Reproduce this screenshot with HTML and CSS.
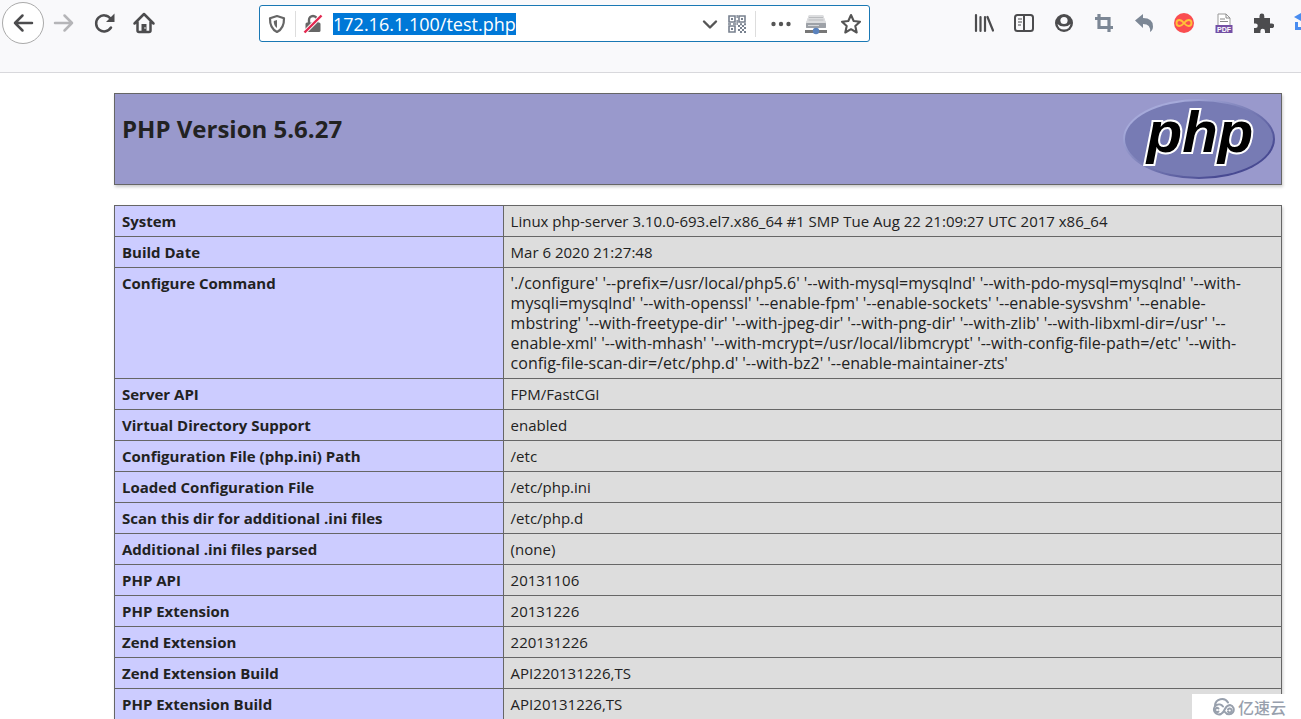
FILE: index.html
```html
<!DOCTYPE html>
<html lang="en">
<head>
<meta charset="utf-8">
<title>phpinfo()</title>
<link rel="stylesheet" href="styles.css">
</head>
<body>
<header class="toolbar">
  <nav class="nav">
    <button class="btn back" aria-label="Back"><svg viewBox="0 0 24 24"><path class="line" d="M21 12H4M11.500 4.500 4 12l7.500 7.500"/></svg></button>
    <button class="btn dim" aria-label="Forward"><svg viewBox="0 0 24 24"><path class="line" d="M3 12h17M12.500 4.500 20 12l-7.500 7.500"/></svg></button>
    <button class="btn" aria-label="Reload"><svg viewBox="0 0 24 24"><path class="line" d="M18.500 7.500A8 8 0 1 0 19 16.500"/><path d="M22.500 2.500v8.500H14z"/></svg></button>
    <button class="btn" aria-label="Home"><svg viewBox="0 0 24 24"><path class="line" d="M2.500 12.500 12 3l9.500 9.500M5.500 11v8.500q0 1.500 1.500 1.500h10q1.500 0 1.500-1.500V11"/><path d="M9.500 20v-7h5v7z"/><circle cx="13" cy="17" r=".8" fill="#fff"/></svg></button>
  </nav>
  <div class="urlbar">
    <svg class="ic" viewBox="0 0 20 20"><path d="M10 2 17 4.200q.3 10-7 13.800Q2.700 14.200 3 4.200z" fill="none" stroke="#666" stroke-width="2.200" stroke-linejoin="round"/><path d="M10 6v8q-3.500-2.500-3.200-7z" fill="#666"/></svg>
    <span class="sep"></span>
    <svg class="ic" viewBox="0 0 20 20"><path d="M6 9V6a4 4 0 0 1 8 0v3" fill="none" stroke="#666" stroke-width="2.400"/><rect x="2.500" y="8.500" width="15" height="9.500" rx="1.500" fill="#666"/><path d="M1.500 18.500 18.500 1.500" stroke="#fff" stroke-width="4"/><path d="M1.500 18.500 18.500 1.500" stroke="#e22850" stroke-width="2.400"/></svg>
    <div class="address"><a class="selected" href="#">172.16.1.100/test.php</a></div>
    <button class="small" aria-label="Show history"><svg class="ic" viewBox="0 0 20 20"><path d="m4 7.500 6 6 6-6" fill="none" stroke="#555" stroke-width="2.400" stroke-linecap="round" stroke-linejoin="round"/></svg></button>
    <button class="small qr" aria-label="QR code"><svg class="ic" viewBox="0 0 20 20"><g fill="none" stroke="#78818f" stroke-width="1.600"><path d="M2 2h6v6H2zM12 2h6v6h-6zM2 12h6v6H2z"/></g><path fill="#78818f" d="M4 4h2v2H4zM14 4h2v2h-2zM4 14h2v2H4zM9.500 1h1.300v3H9.500zM9.500 6h1.300v5H9.500zM1 9.300h3v1.400H1zM6 9.300h3v1.400H6zM13 9.300h2v2h-2zM17 9.300h2v2h-2zM11 11h2v2h-2zM15 11h2v2h-2zM13 13h2v2h-2zM17 13h2v2h-2zM11 15h2v2h-2zM15 15h2v2h-2zM13 17h2v2h-2zM17 17h2v2h-2z"/></svg></button>
    <span class="sep"></span>
    <button class="small dots" aria-label="Page actions"><svg class="ic" viewBox="0 0 20 20"><g fill="#555"><circle cx="2.500" cy="10" r="2.200"/><circle cx="10" cy="10" r="2.200"/><circle cx="17.500" cy="10" r="2.200"/></g></svg></button>
    <button class="small wide" aria-label="Server"><svg viewBox="0 0 22 22"><path d="M4 2h14l3 8v5H1v-5z" fill="#c5c7ca"/><path d="M4 2h14l3 8H1z" fill="#dcdddf"/><path d="M4 4.500h14M3.500 7h15" stroke="#b9bbbe"/><rect x="1" y="10" width="20" height="5" rx="1" fill="#9da1a7"/><path d="M3 12.500h11" stroke="#d5d7da"/><path d="M0 18.500h22" stroke="#777" stroke-width="3"/><circle cx="11" cy="18" r="3.200" fill="#5b83bd"/></svg></button>
    <button class="small star" aria-label="Bookmark"><svg viewBox="0 0 22 22"><path d="m11 2 2.700 6 6.300.7-4.700 4.300 1.400 6.500L11 16.200l-5.700 3.300L6.700 13 2 8.700 8.300 8z" fill="none" stroke="#555" stroke-width="2.100" stroke-linejoin="round"/></svg></button>
  </div>
  <div class="tools">
    <button class="tool" aria-label="Library"><svg viewBox="0 0 20 20"><path d="M2 2v16M6.500 4v14M11 4v14M13.500 4 19 17.500" fill="none" stroke="#4c4c4e" stroke-width="2.200" stroke-linecap="round"/></svg></button>
    <button class="tool" aria-label="Sidebars"><svg viewBox="0 0 20 20"><rect x="1" y="2" width="18" height="16" rx="2.500" fill="none" stroke="#4c4c4e" stroke-width="2"/><path d="M10 2v16" stroke="#4c4c4e" stroke-width="2"/><path d="M4 6h4M4 9h4M4 12h3" stroke="#4c4c4e" stroke-width="1.200"/></svg></button>
    <button class="tool" aria-label="Account"><svg viewBox="0 0 20 20"><circle cx="10" cy="10" r="9" fill="#4c4c4e"/><circle cx="10" cy="7.500" r="3.600" fill="#f9f9fb"/><path d="M3.500 11q2.500 2.600 6.500 2.600t6.500-2.600q-1 5.500-6.500 5.500T3.500 11z" fill="#f9f9fb"/></svg></button>
    <button class="tool" aria-label="Crop"><svg viewBox="0 0 20 20"><path d="M1 5.500h14V19M5 1v13.500h14" fill="none" stroke="#7c8795" stroke-width="3.200"/></svg></button>
    <button class="tool" aria-label="Undo"><svg viewBox="0 0 20 20"><path d="M1 7.500 9 1v4q10 0 10 8.500 0 3.500-3 5.500 1-8-7-8v4z" fill="#7c8795"/></svg></button>
    <button class="tool" aria-label="Infinity"><svg viewBox="0 0 20 20"><circle cx="10" cy="10" r="10" fill="#fa4d50"/><path d="M10 10Q7.500 7 5.500 7a3 3 0 0 0 0 6Q7.500 13 10 10t4.500-3a3 3 0 0 1 0 6Q12.500 13 10 10z" fill="none" stroke="#ffc238" stroke-width="1.900"/></svg></button>
    <button class="tool" aria-label="PDF"><svg viewBox="0 0 20 20"><path d="M4 1h8l4 4v9H4z" fill="#fff" stroke="#999"/><path d="M12 1v4h4M6 6h5M6 8.500h8" fill="none" stroke="#888"/><rect x="1.500" y="12" width="17" height="8" fill="#7450a5"/><text x="10" y="19" class="pdf">PDF</text></svg></button>
    <button class="tool" aria-label="Extensions"><svg viewBox="0 0 20 20"><path d="M0 5h5.500V3a2.400 2.400 0 1 1 4.800 0v2H16v5.500h1.500a2.300 2.300 0 1 1 0 4.500H16V20h-5v-2a2.300 2.300 0 1 0-4.600 0v2H0v-5h1.500a2.200 2.200 0 1 0 0-4.500H0z" fill="#4c4c4e"/></svg></button>
    <button class="tool edge" aria-label="Sync"><svg viewBox="0 0 20 20"><path d="M7 0v8L0 4zM1 9v8h18V9h-3v5H4V9z" fill="#4a8df0"/></svg></button>
  </div>
</header>
<main class="page">
  <section class="banner">
    <h1>PHP Version 5.6.27</h1>
    <svg class="logo" viewBox="0 0 154 82" role="img" aria-label="PHP logo">
      <defs>
        <linearGradient id="rim" x1="0" y1="0" x2="1" y2="1"><stop offset="0.200" stop-color="#a6aada"/><stop offset="0.500" stop-color="#777bb4"/><stop offset="0.800" stop-color="#484a92"/></linearGradient>
      </defs>
      <ellipse cx="77" cy="41" rx="76" ry="40" fill="url(#rim)"/>
      <ellipse cx="77" cy="41" rx="74" ry="38" fill="#777bb4"/>
      <text class="php" x="78" y="54">php</text>
    </svg>
  </section>
  <table class="info">
    <tbody>
      <tr><th scope="row">System</th><td>Linux php-server 3.10.0-693.el7.x86_64 #1 SMP Tue Aug 22 21:09:27 UTC 2017 x86_64</td></tr>
      <tr><th scope="row">Build Date</th><td>Mar 6 2020 21:27:48</td></tr>
      <tr><th scope="row">Configure Command</th><td class="command">'./configure' '--prefix=/usr/local/php5.6' '--with-mysql=mysqlnd' '--with-pdo-mysql=mysqlnd' '--with-<br>mysqli=mysqlnd' '--with-openssl' '--enable-fpm' '--enable-sockets' '--enable-sysvshm' '--enable-<br>mbstring' '--with-freetype-dir' '--with-jpeg-dir' '--with-png-dir' '--with-zlib' '--with-libxml-dir=/usr' '--<br>enable-xml' '--with-mhash' '--with-mcrypt=/usr/local/libmcrypt' '--with-config-file-path=/etc' '--with-<br>config-file-scan-dir=/etc/php.d' '--with-bz2' '--enable-maintainer-zts'</td></tr>
      <tr><th scope="row">Server API</th><td>FPM/FastCGI</td></tr>
      <tr><th scope="row">Virtual Directory Support</th><td>enabled</td></tr>
      <tr><th scope="row">Configuration File (php.ini) Path</th><td>/etc</td></tr>
      <tr><th scope="row">Loaded Configuration File</th><td>/etc/php.ini</td></tr>
      <tr><th scope="row">Scan this dir for additional .ini files</th><td>/etc/php.d</td></tr>
      <tr><th scope="row">Additional .ini files parsed</th><td>(none)</td></tr>
      <tr><th scope="row">PHP API</th><td>20131106</td></tr>
      <tr><th scope="row">PHP Extension</th><td>20131226</td></tr>
      <tr><th scope="row">Zend Extension</th><td>220131226</td></tr>
      <tr><th scope="row">Zend Extension Build</th><td>API220131226,TS</td></tr>
      <tr><th scope="row">PHP Extension Build</th><td>API20131226,TS</td></tr>
    </tbody>
  </table>
</main>
<div class="watermark" lang="zh">
  <svg viewBox="0 0 28 20"><g fill="none" stroke="#98a0ad" stroke-width="2" stroke-linecap="round"><path d="M6 8.500A7 7 0 0 1 19 5.500M14 9.500A5 5 0 1 0 12 17q2.500-1.500 4-5t5-4a4.700 4.700 0 1 1-5 7"/><path d="M9.500 11.500a2 2 0 1 0 0 3M19 12.500a2 2 0 1 1 0 2"/></g></svg>
  <span>亿速云</span>
</div>
</body>
</html>
```
FILE: styles.css
```css
* { box-sizing: border-box; }
body {
  margin: 0;
  height: 100vh;
  overflow: hidden;
  position: relative;
  background: #fff;
  color: #222;
  font-family: "Open Sans", "Noto Sans", sans-serif;
  font-size: 15px;
  line-height: 20px;
}
button { border: 0; padding: 0; background: none; display: flex; align-items: center; justify-content: center; }
svg { display: block; }

.toolbar {
  display: flex;
  align-items: flex-start;
  height: 73px;
  padding-top: 2px;
  background: #f9f9fb;
  border-bottom: 1px solid #d8d8dc;
}
.nav { display: flex; width: 259px; flex: none; padding-left: 2px; }
.btn { width: 40px; height: 42px; fill: #4c4c4e; stroke: none; color: #4c4c4e; }
.btn svg { width: 24px; height: 24px; }
.back { width: 42px; border: 1px solid #aaa; border-radius: 50%; background: #fff; }
.dim { color: #b5b5b8; }
.line { fill: none; stroke: currentColor; stroke-width: 2.5; stroke-linecap: round; stroke-linejoin: round; }

.urlbar {
  display: flex;
  align-items: center;
  flex: 1;
  height: 37px;
  margin-top: 3px;
  padding: 0 7px;
  background: #fff;
  border: 1px solid #1a78b4;
  border-radius: 3px;
}
.ic { width: 20px; height: 20px; flex: none; }
.sep { width: 1px; height: 26px; margin: 0 7px 0 8px; background: #ddd; }
.address { flex: 1; padding-left: 10px; font-size: 18px; line-height: 22px; }
.selected { display: inline-block; background: #0078d7; color: #fff; text-decoration: none; }
.small { flex: none; margin-left: 7px; }
.dots { margin-left: 8px; }
.wide { margin-left: 14px; }
.star { margin-left: 13px; }
.wide svg, .star svg { width: 22px; height: 22px; }

.tools { display: flex; gap: 20px; flex: none; width: 431px; padding: 11px 0 0 104px; overflow: hidden; }
.tool { width: 20px; height: 20px; flex: none; }
.tool svg { width: 20px; height: 20px; }
.pdf { font: bold 7px "Liberation Sans", sans-serif; fill: #fff; text-anchor: middle; }

.page { padding: 20px 19px 0 114px; }
.banner {
  display: flex;
  justify-content: space-between;
  align-items: flex-start;
  height: 92px;
  padding: 4px 5px 4px 7px;
  background: #9999cc;
  border: 1px solid #666;
  box-shadow: 1px 2px 3px #ccc;
}
h1 { margin: 15px 0 0; font-size: 24px; line-height: 32px; font-weight: 700; }
.logo { width: 154px; height: 82px; }
.php {
  font: italic bold 58px "Liberation Sans", sans-serif;
  fill: #000;
  stroke: #fff;
  stroke-width: 4;
  paint-order: stroke;
  text-anchor: middle;
}

.info {
  width: 100%;
  margin-top: 20px;
  border-collapse: collapse;
  table-layout: fixed;
  box-shadow: 1px 2px 3px #ccc;
}
th, td { padding: 5px 7px; border: 1px solid #666; text-align: left; vertical-align: top; white-space: nowrap; }
th { width: 33.3%; background: #ccccff; font-weight: 700; }
td { background: #dddddd; }
.command { font-size: 16px; }

.watermark {
  position: absolute;
  right: 0;
  bottom: 0;
  display: flex;
  align-items: center;
  gap: 1px;
  width: 109px;
  height: 25px;
  padding-left: 17px;
  background: #fff;
  color: #98a0ad;
  font: 500 16px "Noto Sans CJK SC", sans-serif;
}
.watermark svg { width: 28px; height: 20px; }
```
